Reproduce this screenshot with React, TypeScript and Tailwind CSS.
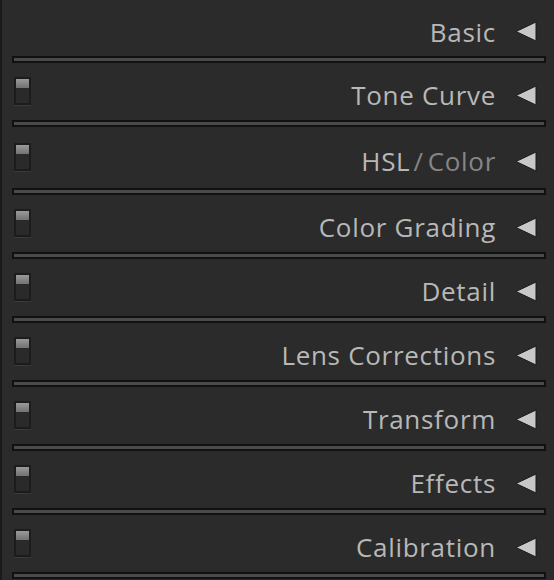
import React from "react";

type Sec = { key: string; label: React.ReactNode; toggle: boolean; h: string };

function Toggle() {
  return (
    <div className="flex flex-col">
      <div className="w-[17px] h-[28px] bg-[#1c1c1c] p-[2px] flex flex-col">
        <div className="h-[9px] bg-gradient-to-b from-[#9a9a9a] to-[#727272]" />
        <div className="flex-1 bg-[#2a2a2a]" />
      </div>
      <div className="w-[17px] h-[1px] bg-[#3a3a3a]" />
    </div>
  );
}

function Triangle() {
  return (
    <svg width="22" height="21" viewBox="0 0 22 21" className="block">
      <polygon points="1,10.5 21,1 21,20" fill="#c8c8c8" stroke="#1a1a1a" strokeWidth="1" strokeLinejoin="round" />
    </svg>
  );
}

function Separator() {
  return (
    <div className="ml-[10px] mr-[8px] h-[7px] bg-[#111111] py-[2px] px-[2px]">
      <div className="h-full bg-[#4a4a4a]" />
    </div>
  );
}

export default function App() {
  const secs: Sec[] = [
    { key: "basic", label: "Basic", toggle: false, h: "h-[56px]" },
    { key: "tc", label: "Tone Curve", toggle: true, h: "h-[57px]" },
    {
      key: "hsl",
      label: (
        <>
          <span>HSL</span>
          <span className="text-[#858585] ml-[3px] mr-[4px]">/</span>
          <span className="text-[#858585]">Color</span>
        </>
      ),
      toggle: true,
      h: "h-[61px]",
    },
    { key: "cg", label: "Color Grading", toggle: true, h: "h-[57px]" },
    { key: "detail", label: "Detail", toggle: true, h: "h-[57px]" },
    { key: "lens", label: "Lens Corrections", toggle: true, h: "h-[57px]" },
    { key: "transform", label: "Transform", toggle: true, h: "h-[57px]" },
    { key: "effects", label: "Effects", toggle: true, h: "h-[57px]" },
    { key: "cal", label: "Calibration", toggle: true, h: "h-[57px]" },
  ];
  return (
    <div
      className="w-[554px] h-[580px] bg-[#2b2b2b] border-l-[2px] border-[#1a1a1a] overflow-hidden"
      style={{ fontFamily: '"Open Sans", "Noto Sans", sans-serif' }}
    >
      {secs.map((s) => (
        <div key={s.key}>
          <div className={`${s.h} flex items-center pl-[12px] pr-[17px]`}>
            <div className="w-[17px]">{s.toggle && <Toggle />}</div>
            <div className="flex-1 flex items-center justify-end pt-[7px]">
              <span className="text-[26px] leading-none text-[#b8b8b8] tracking-[0.7px] whitespace-pre">{s.label}</span>
              <div className="ml-[19px]">
                <Triangle />
              </div>
            </div>
          </div>
          <Separator />
        </div>
      ))}
    </div>
  );
}
